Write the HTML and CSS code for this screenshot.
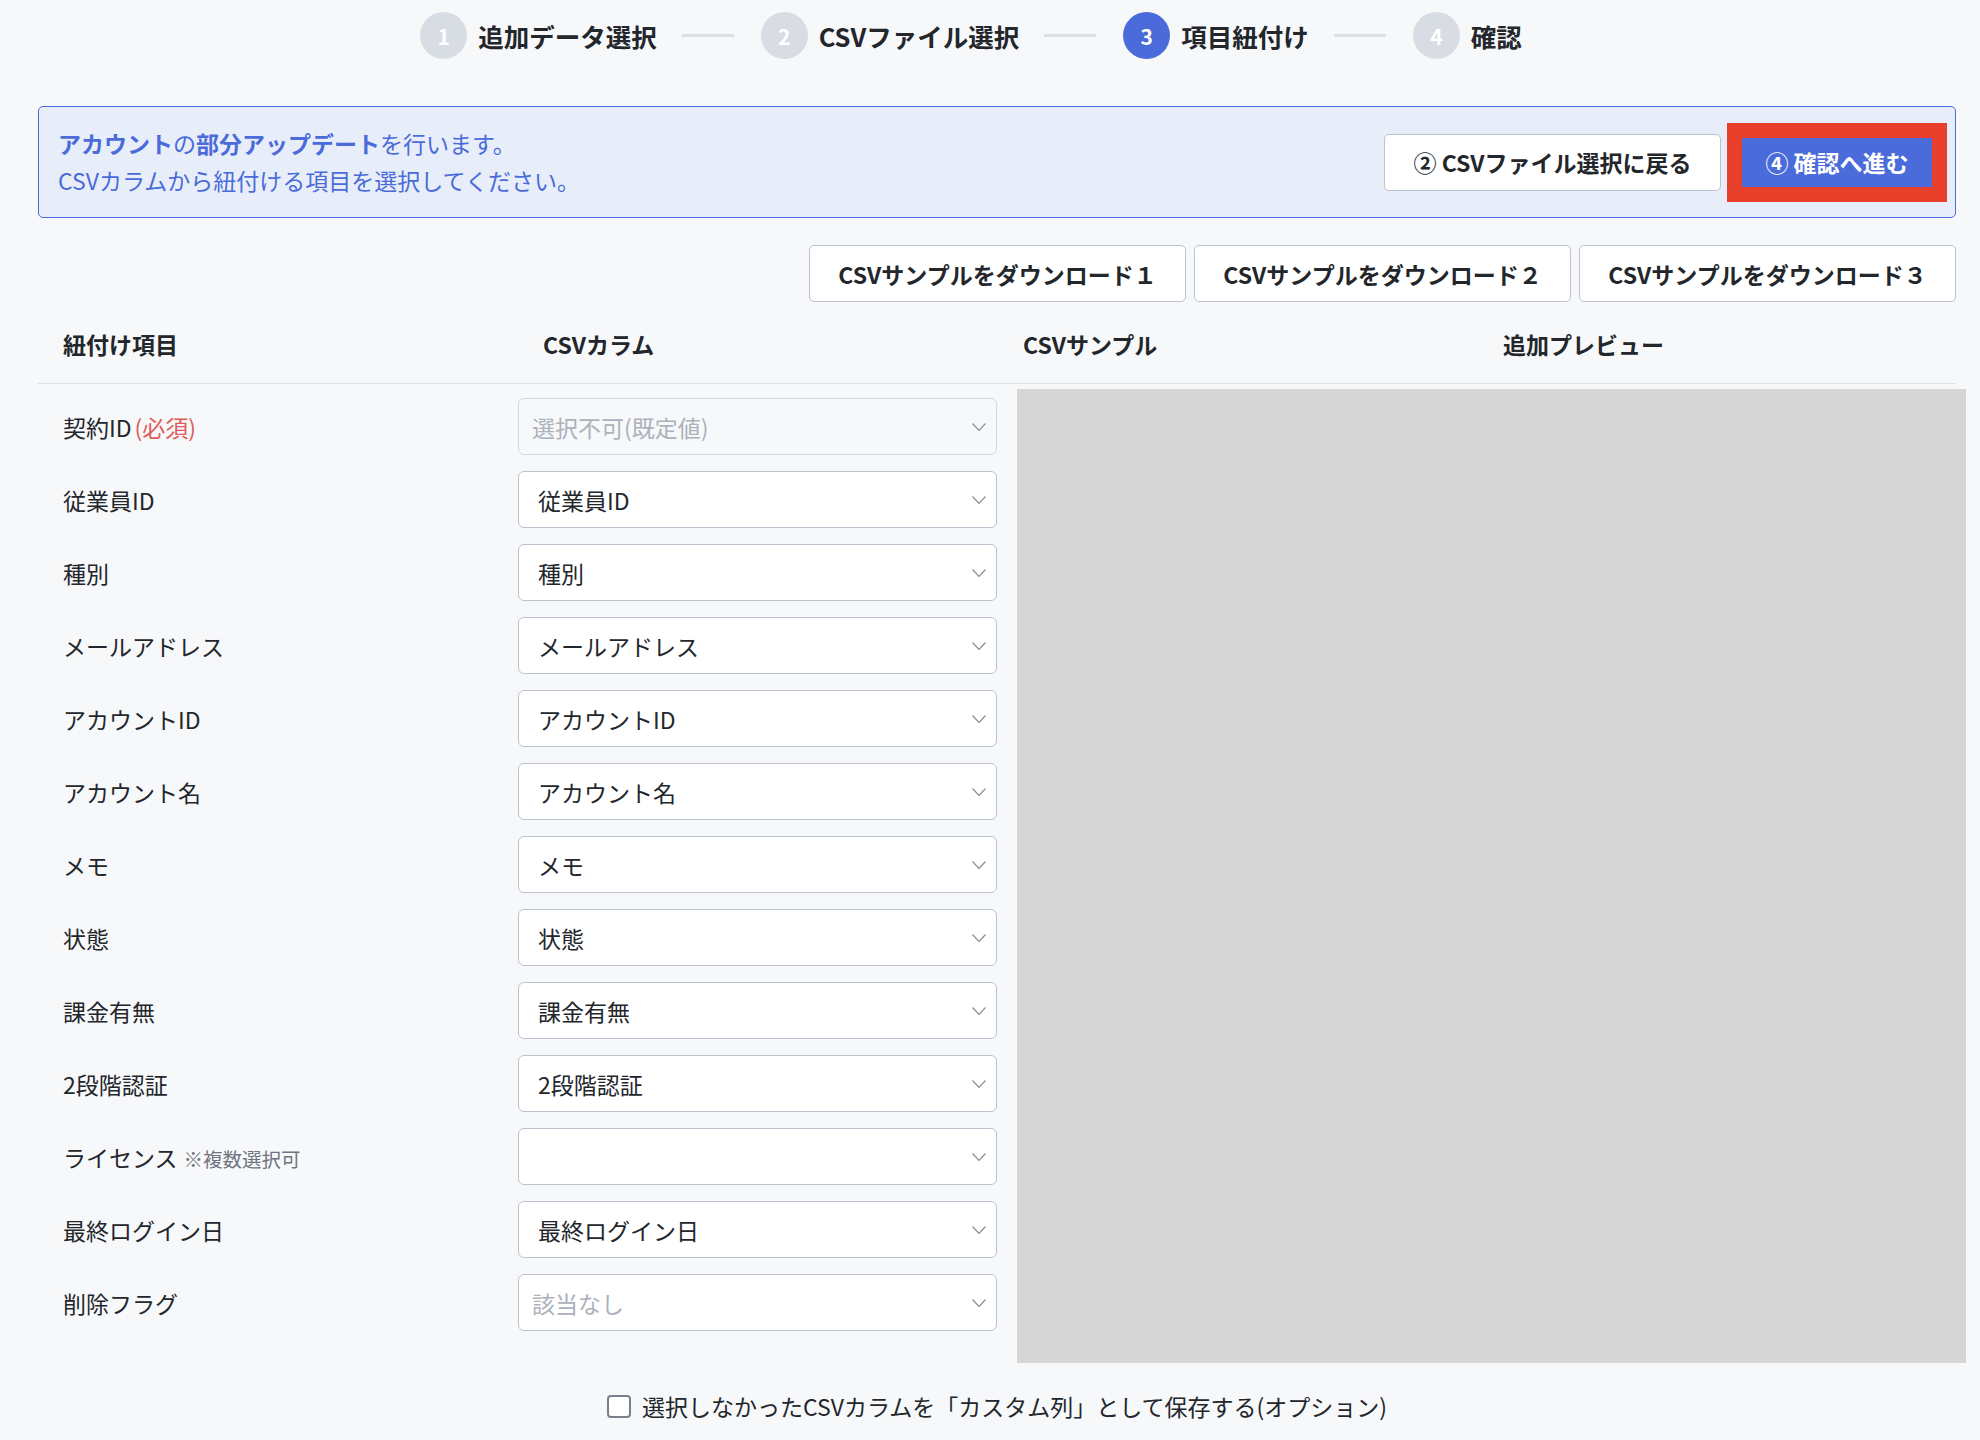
FILE: index.html
```html
<!DOCTYPE html>
<html lang="ja">
<head>
    <meta charset="UTF-8">
    <meta name="viewport" content="width=device-width, initial-scale=1.0">
    <title>CSVインポート - 項目紐付け</title>
    <link rel="stylesheet" href="styles.css">
</head>
<body>
    <div class="page">
        <ol class="stepper">
            <li class="step"><span class="step-num">1</span><span class="step-label">追加データ選択</span></li>
            <li class="step-line"></li>
            <li class="step"><span class="step-num">2</span><span class="step-label">CSVファイル選択</span></li>
            <li class="step-line"></li>
            <li class="step active"><span class="step-num">3</span><span class="step-label">項目紐付け</span></li>
            <li class="step-line"></li>
            <li class="step"><span class="step-num">4</span><span class="step-label">確認</span></li>
        </ol>

        <div class="info-box">
            <div class="info-text">
                <p><strong>アカウント</strong>の<strong>部分アップデート</strong>を行います。</p>
                <p>CSVカラムから紐付ける項目を選択してください。</p>
            </div>
            <div class="info-actions">
                <button class="btn btn-back">② CSVファイル選択に戻る</button>
                <div class="highlight">
                    <button class="btn btn-primary">④ 確認へ進む</button>
                </div>
            </div>
        </div>

        <div class="download-row">
            <button class="btn btn-download">CSVサンプルをダウンロード１</button>
            <button class="btn btn-download">CSVサンプルをダウンロード２</button>
            <button class="btn btn-download">CSVサンプルをダウンロード３</button>
        </div>

        <div class="table-head">
            <div class="th">紐付け項目</div>
            <div class="th">CSVカラム</div>
            <div class="th">CSVサンプル</div>
            <div class="th">追加プレビュー</div>
        </div>

        <div class="mapping">
            <div class="fields">
                <div class="field-row">
                    <div class="field-label">契約ID<span class="required">(必須)</span></div>
                    <div class="select-wrap">
                        <select class="select disabled" disabled><option>選択不可(既定値)</option></select>
                        <svg class="chevron" viewBox="0 0 14 8"><path d="M0.5 0.5 L7 7.5 L13.5 0.5" /></svg>
                    </div>
                </div>
                <div class="field-row">
                    <div class="field-label">従業員ID</div>
                    <div class="select-wrap">
                        <select class="select"><option>従業員ID</option></select>
                        <svg class="chevron" viewBox="0 0 14 8"><path d="M0.5 0.5 L7 7.5 L13.5 0.5" /></svg>
                    </div>
                </div>
                <div class="field-row">
                    <div class="field-label">種別</div>
                    <div class="select-wrap">
                        <select class="select"><option>種別</option></select>
                        <svg class="chevron" viewBox="0 0 14 8"><path d="M0.5 0.5 L7 7.5 L13.5 0.5" /></svg>
                    </div>
                </div>
                <div class="field-row">
                    <div class="field-label">メールアドレス</div>
                    <div class="select-wrap">
                        <select class="select"><option>メールアドレス</option></select>
                        <svg class="chevron" viewBox="0 0 14 8"><path d="M0.5 0.5 L7 7.5 L13.5 0.5" /></svg>
                    </div>
                </div>
                <div class="field-row">
                    <div class="field-label">アカウントID</div>
                    <div class="select-wrap">
                        <select class="select"><option>アカウントID</option></select>
                        <svg class="chevron" viewBox="0 0 14 8"><path d="M0.5 0.5 L7 7.5 L13.5 0.5" /></svg>
                    </div>
                </div>
                <div class="field-row">
                    <div class="field-label">アカウント名</div>
                    <div class="select-wrap">
                        <select class="select"><option>アカウント名</option></select>
                        <svg class="chevron" viewBox="0 0 14 8"><path d="M0.5 0.5 L7 7.5 L13.5 0.5" /></svg>
                    </div>
                </div>
                <div class="field-row">
                    <div class="field-label">メモ</div>
                    <div class="select-wrap">
                        <select class="select"><option>メモ</option></select>
                        <svg class="chevron" viewBox="0 0 14 8"><path d="M0.5 0.5 L7 7.5 L13.5 0.5" /></svg>
                    </div>
                </div>
                <div class="field-row">
                    <div class="field-label">状態</div>
                    <div class="select-wrap">
                        <select class="select"><option>状態</option></select>
                        <svg class="chevron" viewBox="0 0 14 8"><path d="M0.5 0.5 L7 7.5 L13.5 0.5" /></svg>
                    </div>
                </div>
                <div class="field-row">
                    <div class="field-label">課金有無</div>
                    <div class="select-wrap">
                        <select class="select"><option>課金有無</option></select>
                        <svg class="chevron" viewBox="0 0 14 8"><path d="M0.5 0.5 L7 7.5 L13.5 0.5" /></svg>
                    </div>
                </div>
                <div class="field-row">
                    <div class="field-label">2段階認証</div>
                    <div class="select-wrap">
                        <select class="select"><option>2段階認証</option></select>
                        <svg class="chevron" viewBox="0 0 14 8"><path d="M0.5 0.5 L7 7.5 L13.5 0.5" /></svg>
                    </div>
                </div>
                <div class="field-row">
                    <div class="field-label">ライセンス<span class="note">※複数選択可</span></div>
                    <div class="select-wrap">
                        <select class="select"><option></option></select>
                        <svg class="chevron" viewBox="0 0 14 8"><path d="M0.5 0.5 L7 7.5 L13.5 0.5" /></svg>
                    </div>
                </div>
                <div class="field-row">
                    <div class="field-label">最終ログイン日</div>
                    <div class="select-wrap">
                        <select class="select"><option>最終ログイン日</option></select>
                        <svg class="chevron" viewBox="0 0 14 8"><path d="M0.5 0.5 L7 7.5 L13.5 0.5" /></svg>
                    </div>
                </div>
                <div class="field-row">
                    <div class="field-label">削除フラグ</div>
                    <div class="select-wrap">
                        <select class="select placeholder"><option>該当なし</option></select>
                        <svg class="chevron" viewBox="0 0 14 8"><path d="M0.5 0.5 L7 7.5 L13.5 0.5" /></svg>
                    </div>
                </div>
            </div>
            <div class="sample-area"></div>
        </div>

        <label class="custom-col">
            <input type="checkbox">
            <span>選択しなかったCSVカラムを「カスタム列」として保存する(オプション)</span>
        </label>
    </div>
</body>
</html>
```

FILE: styles.css
```css
* {
    box-sizing: border-box;
}

body {
    margin: 0;
    background-color: #f7f8fa;
    color: #23262b;
    font-family: "Noto Sans CJK JP", "Noto Sans", sans-serif;
    font-size: 23px;
}

p {
    margin: 0;
}

.page {
    padding: 0 24px 0 38px;
}

/* stepper */
.stepper {
    list-style: none;
    margin: 0;
    padding: 12px 52px 0 0;
    height: 74px;
    display: flex;
    justify-content: center;
    align-items: flex-start;
}

.step {
    display: flex;
    align-items: center;
    gap: 11px;
}

.step-num {
    width: 47px;
    height: 47px;
    border-radius: 50%;
    background-color: #d8dce3;
    color: #fff;
    font-size: 21px;
    font-weight: bold;
    display: flex;
    align-items: center;
    justify-content: center;
}

.step.active .step-num {
    background-color: #4a6bd9;
}

.step-label {
    font-size: 25.5px;
    font-weight: bold;
    color: #23262b;
}

.step-line {
    width: 52px;
    height: 3px;
    background-color: #dcdfe5;
    margin: 22px 27px 0 25px;
}

/* info box */
.info-box {
    margin-top: 32px;
    height: 112px;
    border: 1px solid #4a6bd9;
    border-radius: 5px;
    background-color: #e8eef9;
    display: flex;
    justify-content: space-between;
    align-items: center;
    padding: 0 8px 0 19px;
}

.info-text {
    color: #4a6bd9;
    line-height: 37px;
}

.info-actions {
    display: flex;
    align-items: center;
    gap: 6px;
}

.btn {
    font-family: inherit;
    font-size: 23px;
    font-weight: bold;
    color: #23262b;
    background-color: #fff;
    border: 1px solid #bcc2ce;
    border-radius: 5px;
    height: 57px;
    padding: 0 24px;
    cursor: pointer;
}

.btn-back {
    width: 337px;
    padding: 0;
}

.highlight {
    background-color: #e8402a;
    padding: 15px;
}

.btn-primary {
    display: block;
    height: 49px;
    width: 190px;
    padding: 0;
    border: none;
    border-radius: 0;
    background-color: #4a6bd9;
    color: #fff;
}

.download-row {
    margin-top: 27px;
    display: flex;
    justify-content: flex-end;
    gap: 8px;
}

.btn-download {
    width: 377px;
    padding: 0;
}

/* mapping table */
.table-head {
    display: grid;
    grid-template-columns: repeat(4, 480px);
    height: 82px;
    padding-top: 2px;
    align-items: center;
    border-bottom: 1px solid #dde1e8;
}

.th {
    padding-left: 25px;
    font-weight: bold;
}

.mapping {
    display: flex;
    align-items: flex-start;
}

.fields {
    width: 979px;
    flex-shrink: 0;
    padding-top: 14px;
}

.field-row {
    display: grid;
    grid-template-columns: 480px 479px;
    align-items: center;
    height: 57px;
    margin-bottom: 16px;
}

.field-label {
    padding-left: 25px;
}

.required {
    color: #e05a5a;
    margin-left: 3px;
}

.note {
    color: #6e7480;
    font-size: 19.5px;
    margin-left: 6px;
}

.select-wrap {
    position: relative;
    height: 57px;
}

.select {
    appearance: none;
    width: 100%;
    height: 57px;
    border: 1px solid #bcc2ce;
    border-radius: 6px;
    background-color: #fff;
    font-family: inherit;
    font-size: 23px;
    color: #23262b;
    padding: 0 40px 0 19px;
}

.select.disabled {
    background-color: #f7f8fa;
    border-color: #d3d7df;
    color: #acb1bb;
    padding-left: 13px;
    opacity: 1;
}

.select.placeholder {
    color: #acb1bb;
    padding-left: 13px;
}

.chevron {
    position: absolute;
    right: 11px;
    top: 25px;
    width: 14px;
    height: 8px;
    fill: none;
    stroke: #8a8f99;
    stroke-width: 1.2;
    pointer-events: none;
}

.sample-area {
    flex: 1;
    margin-top: 5px;
    margin-right: -10px;
    height: 974px;
    background-color: #d6d6d6;
}

.custom-col {
    margin: 26px 0 0;
    display: flex;
    justify-content: center;
    align-items: center;
    gap: 11px;
}

.custom-col input {
    appearance: none;
    width: 24px;
    height: 23px;
    margin: 0;
    border: 2px solid #7a7f88;
    border-radius: 4px;
    background-color: #fff;
}
```
